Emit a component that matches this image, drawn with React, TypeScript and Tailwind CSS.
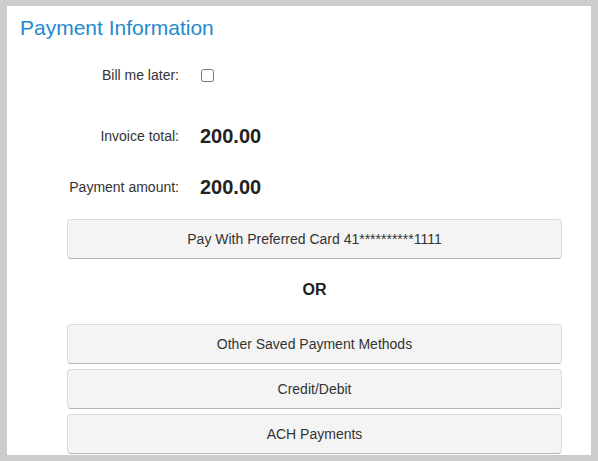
import { useState } from "react";

const rowLabel = "w-[172px] shrink-0 text-right text-[14px] text-[#333]";

function PayButton({ children, className = "" }: { children: React.ReactNode; className?: string }) {
  return (
    <button
      className={
        "ml-[60px] flex h-[40px] w-[495px] items-center justify-center rounded-[4px] border border-[#dcdcdc] border-b-[#b5b5b5] bg-[#f4f4f4] text-[14px] text-[#333] " +
        className
      }
    >
      {children}
    </button>
  );
}

export default function App() {
  const [billLater, setBillLater] = useState(false);

  return (
    <div className="h-[461px] w-[598px] bg-[#cccccc] pt-[6px] pb-[6px] pl-[7px] pr-[7px] font-['Liberation_Sans',Arial,sans-serif]">
      <div className="h-full w-full overflow-hidden bg-white">
        {/* Header */}
        <h2 className="pt-[9px] pl-[13px] text-[21px] leading-[25px] text-[#1f8ad0]">Payment Information</h2>

        <div className="mt-[20px] flex h-[30px] items-center">
          <label htmlFor="bill-later" className={rowLabel}>
            Bill me later:
          </label>
          <input
            id="bill-later"
            type="checkbox"
            checked={billLater}
            onChange={(e) => setBillLater(e.target.checked)}
            className="ml-[22px] mt-[1px] h-[13px] w-[13px]"
          />
        </div>

        <div className="mt-[31px] flex h-[30px] items-center">
          <span className={rowLabel}>Invoice total:</span>
          <span className="ml-[21px] text-[20px] font-bold text-[#222]">200.00</span>
        </div>

        <div className="mt-[21px] flex h-[30px] items-center">
          <span className={rowLabel}>Payment amount:</span>
          <span className="ml-[21px] text-[20px] font-bold text-[#222]">200.00</span>
        </div>

        <PayButton className="mt-[17px]">Pay With Preferred Card 41**********1111</PayButton>

        <div className="ml-[60px] mt-[21px] w-[495px] text-center text-[16px] leading-[20px] font-bold text-[#222]">OR</div>

        <div className="mt-[24px] flex flex-col gap-[5px]">
          <PayButton>Other Saved Payment Methods</PayButton>
          <PayButton>Credit/Debit</PayButton>
          <PayButton>ACH Payments</PayButton>
        </div>
      </div>
    </div>
  );
}
